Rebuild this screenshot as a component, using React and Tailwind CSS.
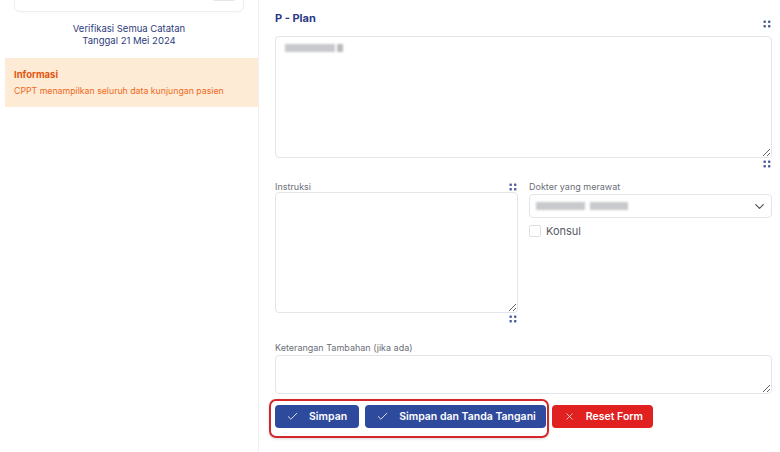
import { Check, X, ChevronDown } from 'lucide-react'

function DragDots() {
  return (
    <svg width="8" height="8" viewBox="0 0 8 8" aria-hidden="true">
      <rect x="0.5" y="0.5" width="2.4" height="2.4" rx="0.6" fill="#4f5f9f" />
      <rect x="5" y="0.5" width="2.4" height="2.4" rx="0.6" fill="#4f5f9f" />
      <rect x="0.5" y="5" width="2.4" height="2.4" rx="0.6" fill="#4f5f9f" />
      <rect x="5" y="5" width="2.4" height="2.4" rx="0.6" fill="#4f5f9f" />
    </svg>
  )
}

const areaCls =
  'block w-full rounded-[4px] border border-[#e3e5ea] bg-white outline-none text-[11px] text-gray-700 px-[9px] py-[6px]'

export default function App() {
  return (
    <div className="h-[452px] w-[780px] overflow-hidden bg-white flex font-['Inter',sans-serif]">
      {/* sidebar */}
      <aside className="w-[259px] shrink-0 border-r border-[#eef0f3] flex flex-col">
        <div className="mx-[14px] -mt-[28px] h-[40px] rounded-[6px] border border-[#eceef2] shadow-[0_1px_2px_rgba(0,0,0,0.03)] flex items-end justify-end px-[6px] pb-[10px]">
          <div className="h-[14px] w-[26px] rounded-[4px] border border-[#e3e5ea]" />
        </div>
        <div className="mt-[11px] text-center text-[9.5px] leading-[12px] text-[#2c3c7c]">
          <div>Verifikasi Semua Catatan</div>
          <div>Tanggal 21 Mei 2024</div>
        </div>
        <div className="ml-[5px] mt-[11px] h-[49px] bg-[#fdebd5] pl-[9px] pt-[11px]">
          <div className="text-[9.5px] font-bold leading-[12px] text-[#e2540e]">Informasi</div>
          <div className="mt-[4px] text-[8.75px] leading-[12px] text-[#ef6a1c]">
            CPPT menampilkan seluruh data kunjungan pasien
          </div>
        </div>
      </aside>

      {/* main form */}
      <main className="flex-1 pl-[16px] pr-[8px] pt-[11px]">
        <div className="flex items-end justify-between h-[17px]">
          <div className="self-start text-[11px] font-bold leading-[14px] text-[#2b3a86]">P - Plan</div>
          <div className="mr-[1px]"><DragDots /></div>
        </div>
        <div className="relative mt-[8px]">
          <textarea className={`${areaCls} h-[122px] resize-y`} defaultValue="" />
          <div className="absolute left-[10px] top-[8px] flex gap-[2px]">
            <div className="h-[8px] w-[50px] bg-[#c8c9cc] blur-[1px]" />
            <div className="h-[8px] w-[6px] bg-[#b9babd] blur-[1px]" />
          </div>
        </div>
        <div className="flex justify-end mt-[2px] mr-[1px]"><DragDots /></div>

        <div className="mt-[14px] grid grid-cols-2 gap-x-[11px]">
          <div>
            <div className="flex items-center justify-between h-[10px]">
              <span className="text-[9px] text-[#6b6f78]">Instruksi</span>
              <span className="mr-[1px]"><DragDots /></span>
            </div>
            <textarea className={`${areaCls} h-[121px] resize-y`} defaultValue="" />
            <div className="flex justify-end mt-[2px] mr-[1px]"><DragDots /></div>
          </div>
          <div>
            <div className="h-[10px] flex items-center">
              <span className="text-[9px] text-[#6b6f78]">Dokter yang merawat</span>
            </div>
            <div className="mt-[2px] h-[24px] rounded-[4px] border border-[#e3e5ea] flex items-center justify-between pl-[6px] pr-[4px]">
              <div className="flex gap-[5px]">
                <div className="h-[8px] w-[49px] bg-[#c8c9cc] blur-[1px]" />
                <div className="h-[8px] w-[38px] bg-[#c8c9cc] blur-[1px]" />
              </div>
              <ChevronDown size={15} strokeWidth={2} className="text-[#555a63]" />
            </div>
            <label className="mt-[5px] flex items-center gap-[5px]">
              <span className="h-[12px] w-[12px] rounded-[2px] border border-[#dcdfe4]" />
              <span className="text-[11px] text-[#555a63]">Konsul</span>
            </label>
          </div>
        </div>

        <div className="mt-[20px] text-[9px] leading-[10px] text-[#6b6f78]">Keterangan Tambahan (jika ada)</div>
        <textarea className={`${areaCls} mt-[2px] h-[39px] resize-y`} defaultValue="" />

        <div className="mt-[5px] flex items-start">
          <div className="-ml-[6px] flex gap-[6px] rounded-[7px] border-2 border-[#d5262b] pl-[4px] pr-[1px] pt-[4px] pb-[8px] shadow-[0_1px_3px_rgba(0,0,0,0.15)]">
            <button className="flex h-[23px] items-center gap-[10px] rounded-[4px] bg-[#2e4a9c] pl-[11px] pr-[12px] text-[10.5px] font-semibold text-white">
              <Check size={13} strokeWidth={1.5} />
              Simpan
            </button>
            <button className="flex h-[23px] items-center gap-[10px] rounded-[4px] bg-[#2e4a9c] pl-[11px] pr-[10px] text-[10.5px] font-semibold text-white">
              <Check size={13} strokeWidth={1.5} />
              Simpan dan Tanda Tangani
            </button>
          </div>
          <button className="ml-[3px] mt-[6px] flex h-[23px] items-center gap-[11px] rounded-[4px] bg-[#e0211f] pl-[12px] pr-[10px] text-[10.5px] font-semibold text-white">
            <X size={11} strokeWidth={1.5} />
            Reset Form
          </button>
        </div>
      </main>
    </div>
  )
}
